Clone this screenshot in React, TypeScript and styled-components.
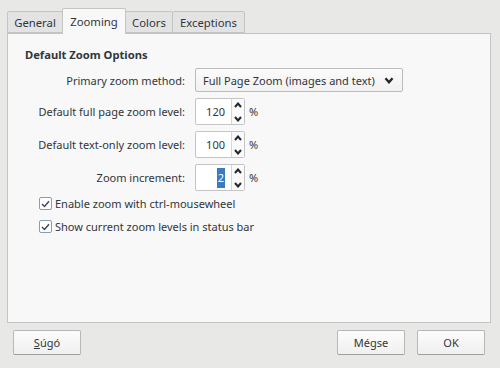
import React, { FC } from 'react'
import styled, { createGlobalStyle } from 'styled-components'

const GlobalStyle = createGlobalStyle`
  html, body {
    margin: 0;
    padding: 0;
    background-color: #e8e8e7;
  }
  body {
    font-family: 'Noto Sans', 'Open Sans', sans-serif;
    font-size: 11px;
    color: #31363b;
  }
`

const Window = styled.div`
  width: 500px;
  height: 368px;
  box-sizing: border-box;
  padding-top: 7px;
  display: flex;
  flex-direction: column;
`

const TabBar = styled.div`
  display: flex;
  align-items: flex-end;
  height: 26px;
  padding-left: 7px;
  position: relative;
  z-index: 1;
`

const Tab = styled.div<{ active?: boolean; width: number }>`
  box-sizing: border-box;
  width: ${({ width }) => width}px;
  height: ${({ active }) => (active ? '26px' : '22px')};
  margin-bottom: ${({ active }) => (active ? '-1px' : '0')};
  margin-left: -1px;
  display: flex;
  align-items: center;
  justify-content: center;
  white-space: nowrap;
  font-size: 11.3px;
  border: 1px solid #c4c4c4;
  border-bottom: ${({ active }) => (active ? 'none' : '1px solid #c4c4c4')};
  border-radius: 2px 2px 0 0;
  background-color: ${({ active }) => (active ? '#f8f8f8' : '#e3e3e3')};
  color: #31363b;
  &:first-child {
    margin-left: 0;
  }
`

const Panel = styled.div`
  box-sizing: border-box;
  height: 290px;
  margin: 0 9px 0 7px;
  border: 1px solid #c4c4c4;
  background-color: #f8f8f8;
  padding: 13px 17px;
`

const Heading = styled.div`
  font-weight: bold;
  font-size: 11.2px;
  line-height: 16px;
  margin-bottom: 5px;
`

const Form = styled.div`
  display: grid;
  grid-template-columns: 160px auto;
  grid-auto-rows: auto;
  column-gap: 10px;
  row-gap: 6px;
  align-items: center;
`

const Label = styled.div`
  text-align: right;
  white-space: nowrap;
`

const FieldRow = styled.div`
  display: flex;
  align-items: center;
`

const Combo = styled.div`
  box-sizing: border-box;
  width: 208px;
  height: 24px;
  display: flex;
  align-items: center;
  justify-content: space-between;
  white-space: nowrap;
  padding: 0 8px 0 7px;
  border: 1px solid #bcbcbc;
  border-radius: 2px;
  background: linear-gradient(#fbfbfb, #f1f1f1);
`

const SpinBox = styled.div`
  box-sizing: border-box;
  width: 50px;
  height: 27px;
  display: flex;
  border: 1px solid #c4c4c4;
  border-radius: 2px;
  background-color: #fff;
`

const SpinValue = styled.div`
  flex: 1;
  display: flex;
  align-items: center;
  justify-content: flex-end;
  padding-right: 6px;
`

const Selected = styled.span`
  background-color: #3b7bc3;
  color: #fff;
  padding: 2px 1px;
  line-height: 16px;
`

const SpinArrows = styled.div`
  width: 12px;
  border-left: 1px solid #d6d6d6;
  display: flex;
  flex-direction: column;
  align-items: center;
  justify-content: space-between;
  padding: 3px 0 2px;
  background-color: #fafafa;
`

const Unit = styled.span`
  margin-left: 4px;
`

const CheckList = styled.div`
  margin-top: 2px;
  margin-left: 14px;
  display: flex;
  flex-direction: column;
  gap: 2px;
`

const CheckRow = styled.div`
  height: 21px;
  display: flex;
  align-items: center;
  gap: 3px;
`

const CheckBox = styled.div`
  box-sizing: border-box;
  width: 13px;
  height: 13px;
  border: 1px solid #8b9bb0;
  border-radius: 2px;
  background-color: #fff;
  display: flex;
  align-items: center;
  justify-content: center;
`

const Footer = styled.div`
  display: flex;
  align-items: center;
  padding: 7px 15px 0 13px;
  gap: 12px;
`

const Button = styled.div`
  box-sizing: border-box;
  width: 68px;
  height: 25px;
  display: flex;
  align-items: center;
  justify-content: center;
  border: 1px solid #b8b8b8;
  border-bottom-color: #9e9e9e;
  border-radius: 2px;
  background: linear-gradient(#fcfcfc, #f0f0f0);
`

const Spacer = styled.div`
  flex: 1;
`

const Mnemonic = styled.span`
  text-decoration: underline;
`

const Chevron: FC<{ up?: boolean; size?: number; weight?: number }> = ({
  up,
  size = 8,
  weight = 1.6
}) => (
  <svg width={size} height={size / 2 + 2} viewBox="0 0 8 6">
    <path
      d={up ? 'M1 5 L4 1.5 L7 5' : 'M1 1 L4 4.5 L7 1'}
      fill="none"
      stroke="#232629"
      strokeWidth={weight}
    />
  </svg>
)

const Spin: FC<{ value: string; selected?: boolean }> = ({ value, selected }) => (
  <FieldRow>
    <SpinBox>
      <SpinValue>{selected ? <Selected>{value}</Selected> : value}</SpinValue>
      <SpinArrows>
        <Chevron up size={8} weight={2} />
        <Chevron size={8} weight={2} />
      </SpinArrows>
    </SpinBox>
    <Unit>%</Unit>
  </FieldRow>
)

const Check: FC<{ label: string }> = ({ label }) => (
  <CheckRow>
    <CheckBox>
      <svg width="9" height="8" viewBox="0 0 9 8">
        <path d="M1 4 L3.5 6.5 L8 1.2" fill="none" stroke="#3b4654" strokeWidth="1.4" />
      </svg>
    </CheckBox>
    <span>{label}</span>
  </CheckRow>
)

const App: FC = () => (
  <>
    <GlobalStyle />
    <Window>
      <TabBar>
        <Tab width={56}>General</Tab>
        <Tab width={64} active>
          Zooming
        </Tab>
        <Tab width={48}>Colors</Tab>
        <Tab width={73}>Exceptions</Tab>
      </TabBar>
      <Panel>
        <Heading>Default Zoom Options</Heading>
        <Form>
          <Label>Primary zoom method:</Label>
          <FieldRow>
            <Combo>
              <span>Full Page Zoom (images and text)</span>
              <Chevron size={10} weight={2} />
            </Combo>
          </FieldRow>
          <Label>Default full page zoom level:</Label>
          <Spin value="120" />
          <Label>Default text-only zoom level:</Label>
          <Spin value="100" />
          <Label>Zoom increment:</Label>
          <Spin value="2" selected />
        </Form>
        <CheckList>
          <Check label="Enable zoom with ctrl-mousewheel" />
          <Check label="Show current zoom levels in status bar" />
        </CheckList>
      </Panel>
      <Footer>
        <Button>
          <span>
            <Mnemonic>S</Mnemonic>úgó
          </span>
        </Button>
        <Spacer />
        <Button>Mégse</Button>
        <Button>OK</Button>
      </Footer>
    </Window>
  </>
)

export default App
